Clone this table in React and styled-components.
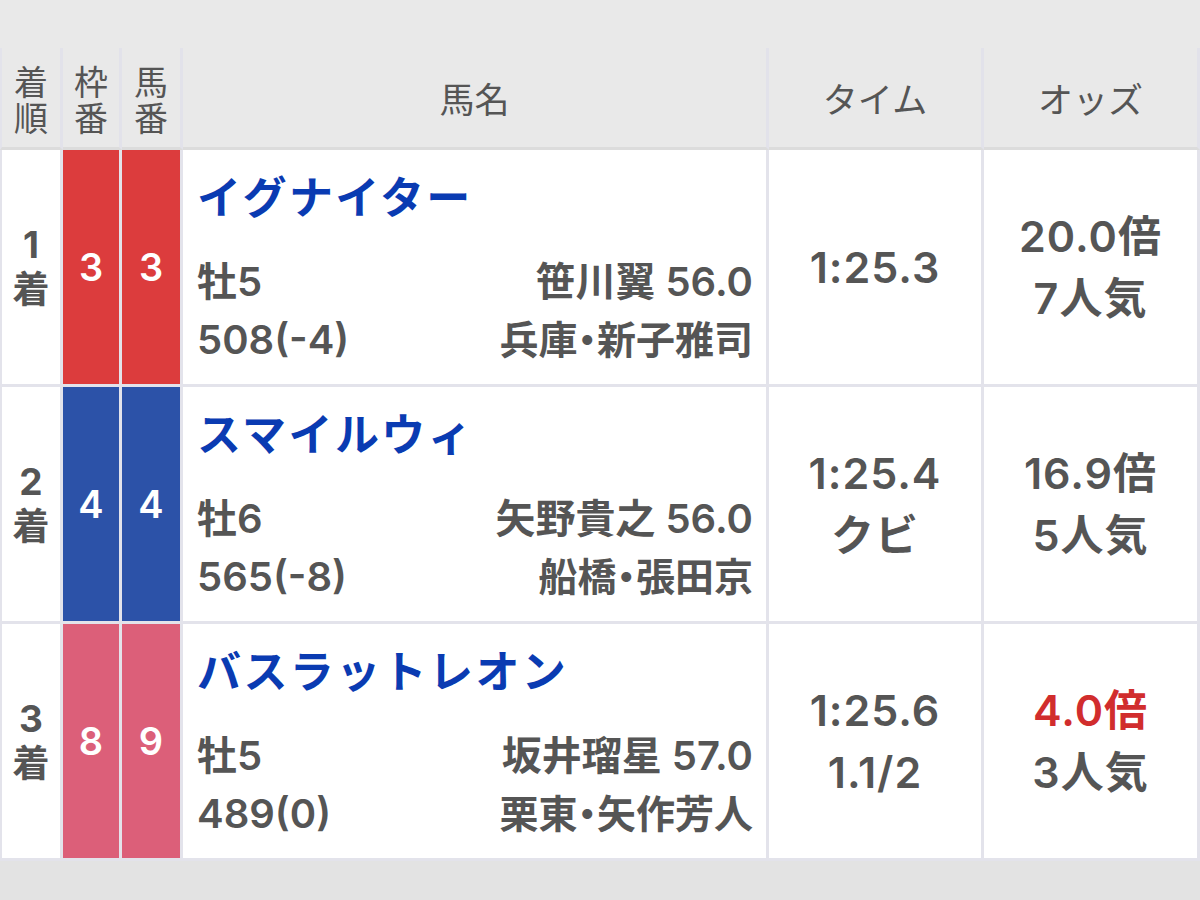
import React from "react";
import styled, { createGlobalStyle } from "styled-components";

const GlobalStyle = createGlobalStyle`
  html, body {
    margin: 0;
    padding: 0;
    background: #e3e3e3;
  }
  body {
    font-family: "Inter", "Noto Sans CJK JP", sans-serif;
    color: #555;
  }
`;

const WAKU = {
  3: "#dc3c3d",
  4: "#2c52a8",
  8: "#dc5f79",
};

const results = [
  {
    rank: 1,
    waku: 3,
    umaban: 3,
    name: "イグナイター",
    sex: "牡5",
    weight: "508(-4)",
    jockey: "笹川翼 56.0",
    trainer: "兵庫・新子雅司",
    time: "1:25.3",
    margin: "",
    odds: "20.0倍",
    pop: "7人気",
    fav: false,
  },
  {
    rank: 2,
    waku: 4,
    umaban: 4,
    name: "スマイルウィ",
    sex: "牡6",
    weight: "565(-8)",
    jockey: "矢野貴之 56.0",
    trainer: "船橋・張田京",
    time: "1:25.4",
    margin: "クビ",
    odds: "16.9倍",
    pop: "5人気",
    fav: false,
  },
  {
    rank: 3,
    waku: 8,
    umaban: 9,
    name: "バスラットレオン",
    sex: "牡5",
    weight: "489(0)",
    jockey: "坂井瑠星 57.0",
    trainer: "栗東・矢作芳人",
    time: "1:25.6",
    margin: "1.1/2",
    odds: "4.0倍",
    pop: "3人気",
    fav: true,
  },
];

export default function App() {
  return (
    <>
      <GlobalStyle />
      <Page>
        <Table>
          <colgroup>
            <col style={{ width: 63 }} />
            <col style={{ width: 59 }} />
            <col style={{ width: 61 }} />
            <col />
            <col style={{ width: 215 }} />
            <col style={{ width: 216 }} />
          </colgroup>
          <thead>
            <tr>
              <Th>
                <Stack>
                  <span>着</span>
                  <span>順</span>
                </Stack>
              </Th>
              <Th>
                <Stack>
                  <span>枠</span>
                  <span>番</span>
                </Stack>
              </Th>
              <Th>
                <Stack>
                  <span>馬</span>
                  <span>番</span>
                </Stack>
              </Th>
              <Th>馬名</Th>
              <Th>タイム</Th>
              <Th>オッズ</Th>
            </tr>
          </thead>
          <tbody>
            {results.map((r) => (
              <tr key={r.rank}>
                <RankCell>
                  {r.rank}
                  <br />着
                </RankCell>
                <WakuCell $color={WAKU[r.waku]}>{r.waku}</WakuCell>
                <WakuCell $color={WAKU[r.waku]}>{r.umaban}</WakuCell>
                <HorseCell>
                  <HorseName>{r.name}</HorseName>
                  <InfoRow>
                    <span>{r.sex}</span>
                    <span>{r.jockey}</span>
                  </InfoRow>
                  <InfoRow>
                    <span>{r.weight}</span>
                    <Trainer>{r.trainer}</Trainer>
                  </InfoRow>
                </HorseCell>
                <CenterCell>
                  {r.time}
                  {r.margin ? (
                    <>
                      <br />
                      {r.margin}
                    </>
                  ) : null}
                </CenterCell>
                <CenterCell>
                  <Odds $fav={r.fav}>{r.odds}</Odds>
                  <br />
                  {r.pop}
                </CenterCell>
              </tr>
            ))}
          </tbody>
        </Table>
      </Page>
    </>
  );
}

const Page = styled.div`
  width: 1200px;
  height: 900px;
  background: linear-gradient(#e9e9e9 0 50%, #e3e3e3 50% 100%);
  padding-top: 48px;
  box-sizing: border-box;
  overflow: hidden;
`;

const Table = styled.table`
  width: 1200px;
  table-layout: fixed;
  border-collapse: separate;
  border-spacing: 0;
  background: #fff;

  & th,
  & td {
    box-sizing: border-box;
    border-right: 3px solid #e3e3eb;
    border-bottom: 3px solid #e3e3eb;
    padding: 0;
  }
  & tr > *:first-child {
    border-left: 2px solid #e3e3eb;
  }
`;

const Th = styled.th`
  height: 102px;
  background: #e9e9e9;
  border-bottom-color: #dcdcdc !important;
  border-right-color: #e2e2ea !important;
  font-size: 35px;
  font-weight: 400;
  line-height: 40px;
  color: #555;
  text-align: center;
  vertical-align: middle;
  font-family: "Noto Sans CJK JP", sans-serif;
`;

const Stack = styled.div`
  display: flex;
  flex-direction: column;
  align-items: center;
  font-size: 34px;
  line-height: 36px;
  padding-top: 2px;
`;

const RankCell = styled.td`
  height: 237px;
  text-align: center;
  vertical-align: middle;
  font-size: 37px;
  font-weight: 700;
  line-height: 45px;
  color: #555;
`;

const WakuCell = styled.td`
  background: ${(p) => p.$color};
  color: #fff;
  text-align: center;
  vertical-align: middle;
  font-size: 38px;
  font-weight: 600;
`;

const HorseCell = styled.td`
  vertical-align: top;
  padding: 20px 13px 15px 14px !important;
`;

const HorseName = styled.div`
  font-size: 44px;
  font-weight: 700;
  line-height: 56px;
  color: #0a3bb2;
  letter-spacing: 2.4px;
  margin-bottom: 27px;
  white-space: nowrap;
`;

const InfoRow = styled.div`
  display: flex;
  justify-content: space-between;
  font-size: 40px;
  font-weight: 600;
  line-height: 58px;
  color: #555;
  white-space: nowrap;
`;

const Trainer = styled.span`
  font-feature-settings: "palt";
  font-size: 39px;
`;

const CenterCell = styled.td`
  text-align: center;
  vertical-align: middle;
  font-size: 43px;
  font-weight: 600;
  line-height: 62px;
  letter-spacing: 1px;
  color: #555;
`;

const Odds = styled.span`
  color: ${(p) => (p.$fav ? "#d12d2d" : "#555")};
`;
